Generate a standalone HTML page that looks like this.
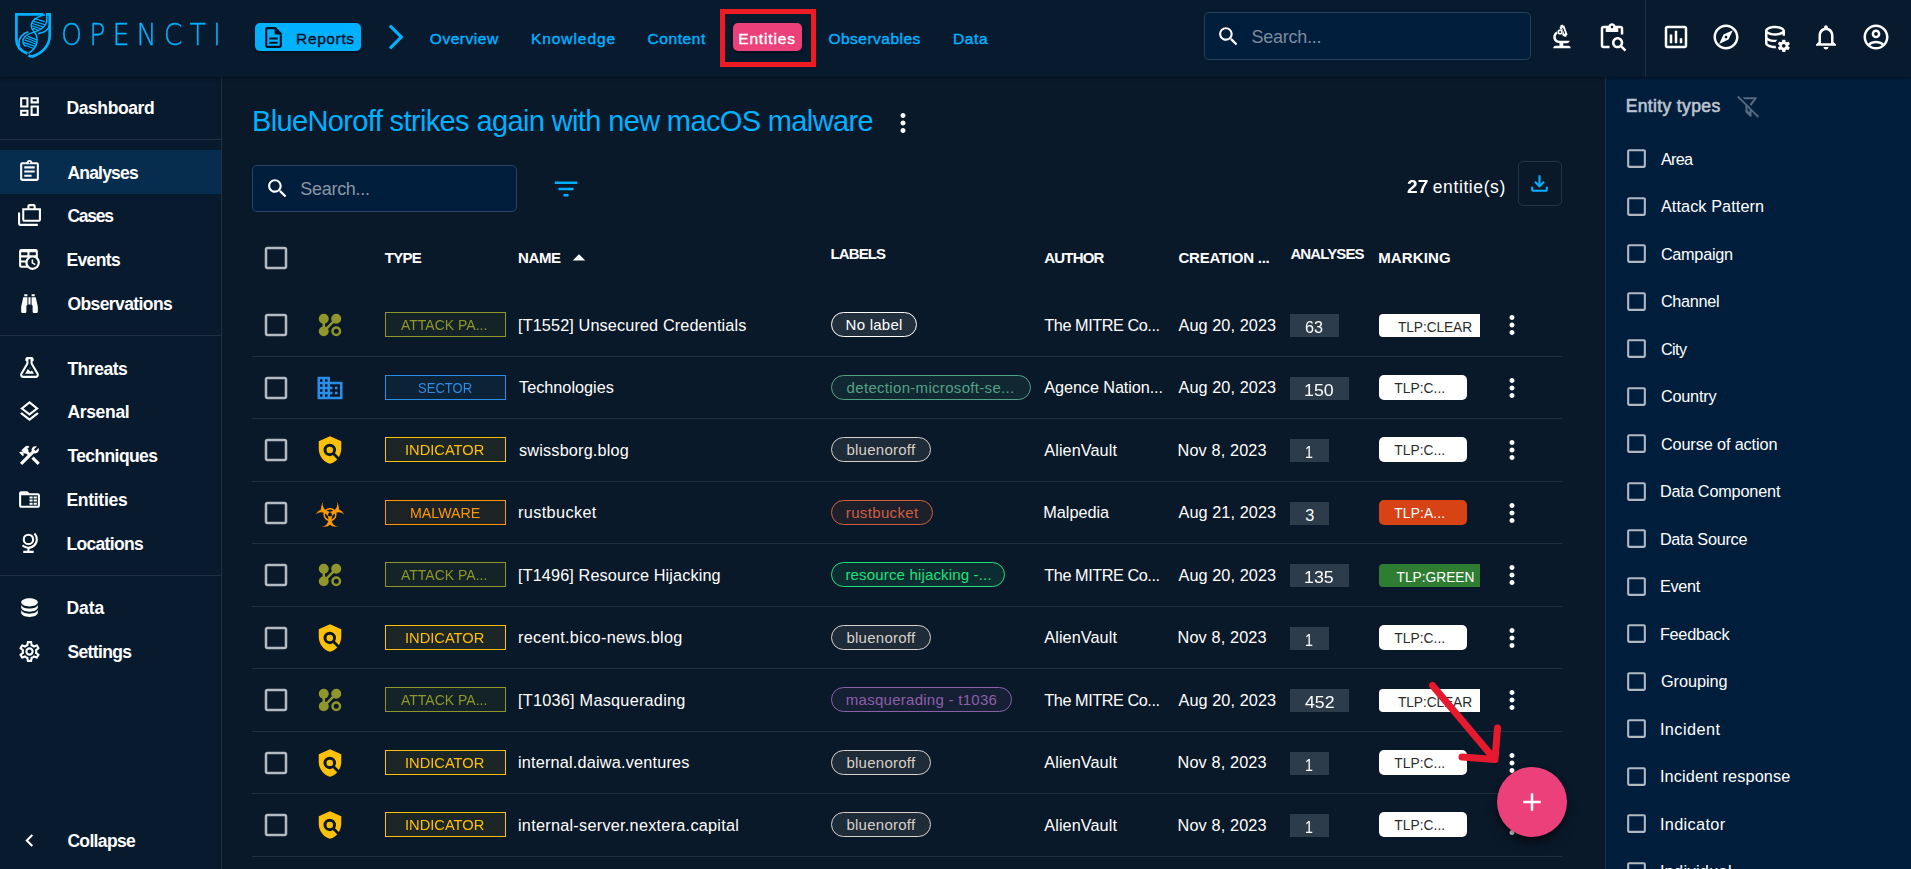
<!DOCTYPE html>
<html lang="en"><head><meta charset="utf-8"><title>OpenCTI - Entities</title><style>
html,body{margin:0;padding:0;}
body{width:1911px;height:869px;overflow:hidden;background:#0a1929;position:relative;font-family:'Liberation Sans', Arial, sans-serif;}
.sec{position:absolute;left:0;top:0;width:0;height:0;}
.b,.ic,.t{position:absolute;}
.ic{display:block;overflow:visible;}
.t{white-space:pre;color:#fff;font-weight:normal;font-family:'Liberation Sans', Arial, sans-serif;}
</style></head>
<body>
<header class="sec appbar">
<div class="b" style="left:0px;top:0px;width:1911px;height:77px;background:#071a2e;box-shadow:0 1px 3px rgba(0,0,0,.5);z-index:2"></div>
<svg class="ic" style="left:0;top:0;width:70px;height:70px;z-index:3" viewBox="0 0 70 70" fill="none" stroke="#00b1ff" stroke-linecap="butt">
<path d="M43.3 14.3H16.4V39.5C16.4 45.8 20.8 51 27.3 53.6M46.1 14.3H49.7V35.4C49.7 45 42.5 53.5 32.6 56.4" stroke-width="2.7"/>
<path d="M28.6 55.3Q30.4 56.5 33.2 56.3" stroke-width="2.8"/>
<path d="M45 14.7C37 16.3 31.3 20.5 31.2 25.5C31.1 28 32.5 30 34 31.6C36.5 34.5 37.8 38 36.9 42.5C36 47 32.5 50.8 28.5 53.3" stroke-width="1.5"/>
<path d="M46.4 14.7C48 19.5 46.5 24.5 42.5 28C40 30.2 36.5 31.5 32.6 32.6C27 34.3 22.9 37.5 22.9 41.5C22.9 43.5 24 45.2 25.7 46.3" stroke-width="1.5"/>
<path d="M50.2 23.6C49.3 29 44.5 32.8 38.1 33.6" stroke-width="1.9"/>
<path d="M28.5 31.8C22.5 33.5 18.5 38 19 43.5C19.1 44.6 19.4 45.6 19.8 46.4" stroke-width="1.7"/>
<path d="M34 18.5L44.7 21.6M32.3 20.9L45 24.7M31.6 23.3L43.6 27.1M31.9 25.7L40.9 28.8M33 28.1L38.1 30.2M27.8 36.4L36.7 39.9M25.7 37.8L37.1 42.3M24.7 39.9L36.4 44.3M24 42.6L35.4 46.4M24.7 45L33.6 48.5" stroke-width="1.15"/>
</svg>
<div class="b" style="left:255px;top:23px;width:106px;height:28px;background:#00b1ff;border-radius:5px;box-shadow:0 2px 3px rgba(0,0,0,.35);z-index:3"></div>
<svg class="ic" style="left:260.9px;top:25px;width:25px;height:25px;color:#04111f;z-index:4" viewBox="0 0 24 24" fill="currentColor"><path d="M8 16h8v2H8zm0-4h8v2H8zm6-10H6c-1.1 0-2 .9-2 2v16c0 1.1.89 2 1.99 2H18c1.1 0 2-.9 2-2V8l-6-6zm4 18H6V4h7v5h5v11z"/></svg>
<svg class="ic" style="left:381.2px;top:22.3px;width:30px;height:30px;color:#00b1ff;z-index:3" viewBox="0 0 24 24" fill="currentColor"><path d="M6.23 20.23 8 22l10-10L8 2 6.23 3.77 14.46 12z"/></svg>
<div class="b" style="left:733px;top:23px;width:69px;height:28px;background:#ec407a;border-radius:5px;box-shadow:0 2px 4px rgba(0,0,0,.45);z-index:3"></div>
<div class="b" style="left:1204px;top:12px;width:327px;height:47.5px;background:#001e3c;border:1px solid #25405f;border-radius:5px;box-sizing:border-box;z-index:3"></div>
<svg class="ic" style="left:1215.9px;top:23.8px;width:25px;height:25px;color:#fff;z-index:4" viewBox="0 0 24 24" fill="currentColor"><path d="M15.5 14h-.79l-.28-.27C15.41 12.59 16 11.11 16 9.5 16 5.91 13.09 3 9.5 3S3 5.91 3 9.5 5.91 16 9.5 16c1.61 0 3.09-.59 4.23-1.57l.27.28v.79l5 4.99L20.49 19l-4.99-5zm-6 0C7.01 14 5 11.99 5 9.5S7.01 5 9.5 5 14 7.01 14 9.5 11.99 14 9.5 14z"/></svg>
<svg class="ic" style="left:1547px;top:22.2px;width:30px;height:30px;color:#fff;z-index:3" viewBox="0 0 24 24" fill="currentColor"><path d="M7 19c-1.1 0-2 .9-2 2h14c0-1.1-.9-2-2-2h-4v-2h3c1.1 0 2-.9 2-2h-8c-1.66 0-3-1.34-3-3 0-1.09.59-2.04 1.46-2.56C8.17 9.03 8 8.54 8 8c0-.21.04-.42.09-.62C6.28 8.13 5 9.92 5 12c0 2.76 2.24 5 5 5v2H7z"/><path d="M10.56 5.51C11.91 5.54 13 6.64 13 8c0 .75-.33 1.41-.85 1.87l.59 1.62.94-.34.34.94 1.88-.68-.34-.94.94-.34-2.74-7.52-.94.34-.34-.94-1.88.68.34.94-.94.35.56 1.53z"/><circle cx="10.5" cy="7.9" r="2.1"/><circle cx="10.5" cy="7.9" r=".8" fill="#071a2e"/><path d="M12.6 4.9l1.5 4" stroke="#071a2e" stroke-width=".85" stroke-linecap="round"/></svg>
<svg class="ic" style="left:1597px;top:22.2px;width:30px;height:30px;color:#fff;z-index:3" viewBox="0 0 24 24" fill="currentColor"><path d="M5 5h2v3h10V5h2v5h2V5c0-1.1-.9-2-2-2h-4.18C14.4 1.84 13.3 1 12 1s-2.4.84-2.82 2H5c-1.1 0-2 .9-2 2v14c0 1.1.9 2 2 2h5v-2H5V5zm7-2c.55 0 1 .45 1 1s-.45 1-1 1-1-.45-1-1 .45-1 1-1z"/><path d="M20.3 18.9c.4-.7.7-1.5.7-2.4 0-2.5-2-4.5-4.5-4.5S12 14 12 16.5s2 4.5 4.5 4.5c.9 0 1.7-.3 2.4-.7l3.2 3.2 1.4-1.4-3.2-3.2zm-3.8.1c-1.4 0-2.5-1.1-2.5-2.5s1.1-2.5 2.5-2.5 2.5 1.1 2.5 2.5-1.1 2.5-2.5 2.5z"/></svg>
<svg class="ic" style="left:1661px;top:22.2px;width:30px;height:30px;color:#fff;z-index:3" viewBox="0 0 24 24" fill="currentColor"><path d="M9 17H7v-7h2v7zm4 0h-2V7h2v10zm4 0h-2v-4h2v4zm2 2H5V5h14v14zm0-16H5c-1.1 0-2 .9-2 2v14c0 1.1.9 2 2 2h14c1.1 0 2-.9 2-2V5c0-1.1-.9-2-2-2z"/></svg>
<svg class="ic" style="left:1711px;top:22.2px;width:30px;height:30px;color:#fff;z-index:3" viewBox="0 0 24 24" fill="currentColor"><path d="M12 2C6.48 2 2 6.48 2 12s4.48 10 10 10 10-4.48 10-10S17.52 2 12 2zm0 18c-4.41 0-8-3.59-8-8s3.59-8 8-8 8 3.59 8 8-3.59 8-8 8zm-5.5-2.5 7.51-3.49L17.5 6.5 9.99 9.99 6.5 17.5zm5.5-6.6c.61 0 1.1.49 1.1 1.1s-.49 1.1-1.1 1.1-1.1-.49-1.1-1.1.49-1.1 1.1-1.1z"/></svg>
<svg class="ic" style="left:1760.2px;top:22.2px;width:30px;height:30px;color:#fff;z-index:3" viewBox="0 0 24 24" fill="currentColor"><path d="M12 3C7.58 3 4 4.79 4 7v10c0 2.21 3.59 4 8 4 .34 0 .68-.01 1.01-.03a7 7 0 0 1-.6-1.99c-.14.01-.27.02-.41.02-3.87 0-6-1.5-6-2v-2.23c1.61.78 3.72 1.23 6 1.23.22 0 .44 0 .66-.020.28-.68.67-1.31 1.14-1.86-.58.08-1.18.13-1.8.13-3.87 0-6-1.5-6-2.25V9.64C7.47 10.47 9.61 11 12 11s4.53-.53 6-1.36v1.43a7 7 0 0 1 2-.010V7c0-2.21-3.58-4-8-4zm0 6C8.13 9 6 7.5 6 7s2.13-2 6-2 6 1.5 6 2-2.13 2-6 2z"/><path d="M23.8 20.4c.1 0 .1.1 0 .2l-1 1.7c-.1.1-.2.1-.3.1l-1.2-.4c-.3.2-.5.3-.8.5l-.2 1.3c0 .1-.1.2-.2.2h-2c-.1 0-.2-.1-.3-.2l-.2-1.3c-.3-.1-.6-.3-.8-.5l-1.2.5c-.1 0-.2 0-.3-.1l-1-1.7c-.1-.1 0-.2.1-.3l1.1-.8v-1l-1.1-.8c-.1-.1-.1-.2-.1-.3l1-1.7c.1-.1.2-.1.3-.1l1.2.5c.3-.2.5-.3.8-.5l.2-1.3c0-.1.1-.2.3-.2h2c.1 0 .2.1.2.2l.2 1.3c.3.1.6.3.9.5l1.2-.5c.1 0 .3 0 .3.1l1 1.7c.1.1 0 .2-.1.3l-1.1.8v1l1.1.8zM20.5 19c0-.800-.7-1.5-1.5-1.5s-1.5.7-1.5 1.5.7 1.5 1.5 1.5 1.5-.7 1.5-1.5z"/></svg>
<svg class="ic" style="left:1811px;top:22.2px;width:30px;height:30px;color:#fff;z-index:3" viewBox="0 0 24 24" fill="currentColor"><path d="M12 22c1.1 0 2-.9 2-2h-4c0 1.1.9 2 2 2zm6-6v-5c0-3.07-1.63-5.64-4.5-6.32V4c0-.83-.67-1.5-1.5-1.5s-1.5.67-1.5 1.5v.68C7.64 5.36 6 7.92 6 11v5l-2 2v1h16v-1l-2-2zm-2 1H8v-6c0-2.48 1.51-4.5 4-4.5s4 2.02 4 4.5v6z"/></svg>
<svg class="ic" style="left:1861px;top:22.2px;width:30px;height:30px;color:#fff;z-index:3" viewBox="0 0 24 24" fill="currentColor"><path d="M12 2C6.48 2 2 6.48 2 12s4.48 10 10 10 10-4.48 10-10S17.52 2 12 2zM7.35 18.5C8.66 17.56 10.26 17 12 17s3.34.56 4.65 1.5C15.34 19.44 13.74 20 12 20s-3.34-.56-4.65-1.5zm10.79-1.38C16.45 15.8 14.32 15 12 15s-4.45.8-6.14 2.12C4.7 15.73 4 13.95 4 12c0-4.42 3.58-8 8-8s8 3.58 8 8c0 1.95-.7 3.73-1.86 5.12z"/><path d="M12 6c-1.93 0-3.5 1.57-3.5 3.5S10.07 13 12 13s3.5-1.57 3.5-3.5S13.93 6 12 6zm0 5c-.83 0-1.5-.67-1.5-1.5S11.17 8 12 8s1.5.67 1.5 1.5S12.83 11 12 11z"/></svg>
<div class="b" style="left:1644.5px;top:0px;width:1px;height:77px;background:#1d2d40;z-index:3"></div>
<span class="t" style="left:60.74px;top:17px;line-height:35px;font-size:30.5px;font-weight:200;color:#00b1ff;font-family:'DejaVu Sans Light','DejaVu Sans',sans-serif;-webkit-text-stroke:0.35px;letter-spacing:8.049px;z-index:3;transform:scaleX(0.88);transform-origin:0 50%">OPENCTI</span>
<span class="t" style="left:296.1px;top:30px;line-height:17px;font-size:15.5px;color:#04111f;-webkit-text-stroke:0.4px;letter-spacing:0.613px;z-index:4">Reports</span>
<span class="t" style="left:429.8px;top:30px;line-height:17px;font-size:15.5px;color:#00b1ff;-webkit-text-stroke:0.4px;letter-spacing:0.543px;z-index:3">Overview</span>
<span class="t" style="left:531px;top:30px;line-height:17px;font-size:15.5px;color:#00b1ff;-webkit-text-stroke:0.4px;letter-spacing:0.928px;z-index:3">Knowledge</span>
<span class="t" style="left:647.5px;top:30px;line-height:17px;font-size:15.5px;color:#00b1ff;-webkit-text-stroke:0.4px;letter-spacing:0.586px;z-index:3">Content</span>
<span class="t" style="left:738.2px;top:30px;line-height:17px;font-size:15.5px;-webkit-text-stroke:0.4px;letter-spacing:0.86px;z-index:4">Entities</span>
<span class="t" style="left:828.4px;top:30px;line-height:17px;font-size:15.5px;color:#00b1ff;-webkit-text-stroke:0.4px;letter-spacing:0.494px;z-index:3">Observables</span>
<span class="t" style="left:953px;top:30px;line-height:17px;font-size:15.5px;color:#00b1ff;-webkit-text-stroke:0.4px;letter-spacing:0.627px;z-index:3">Data</span>
<span class="t" style="left:1251.6px;top:27px;line-height:20px;font-size:18px;color:#7d8b9e;letter-spacing:-0.279px;z-index:4">Search...</span>
</header>
<nav class="sec sidebar">
<div class="b" style="left:0px;top:77px;width:221px;height:792px;background:#071a2e;border-right:1px solid #1f3042;"></div>
<div class="b" style="left:0px;top:150px;width:221px;height:43.75px;background:#062d4e"></div>
<svg class="ic" style="left:17px;top:93.9px;width:25px;height:25px;color:#fff;" viewBox="0 0 24 24" fill="currentColor"><path d="M19 5v2h-4V5h4M9 5v6H5V5h4m10 8v6h-4v-6h4M9 17v2H5v-2h4M21 3h-8v6h8V3zM11 3H3v10h8V3zm10 8h-8v10h8V11zm-10 4H3v6h8v-6z"/></svg>
<div class="b" style="left:0px;top:139px;width:221px;height:1px;background:#1f3042"></div>
<svg class="ic" style="left:17px;top:159.4px;width:25px;height:25px;color:#fff;" viewBox="0 0 24 24" fill="currentColor"><path d="M7 15h7v2H7zm0-4h10v2H7zm0-4h10v2H7zm12-4h-4.18C14.4 1.84 13.3 1 12 1c-1.3 0-2.4.84-2.82 2H5c-.14 0-.27.01-.4.04-.39.08-.74.28-1.01.55-.18.18-.33.4-.43.64-.1.23-.16.49-.16.77v14c0 .27.06.54.16.78s.25.45.43.64c.27.27.62.47 1.01.55.13.02.26.03.4.03h14c1.1 0 2-.9 2-2V5c0-1.1-.9-2-2-2zm-7-.25c.41 0 .75.34.75.75s-.34.75-.75.75-.75-.34-.75-.75.34-.75.75-.75zM19 19H5V5h14v14z"/></svg>
<svg class="ic" style="left:17px;top:203.1px;width:25px;height:25px;color:#fff;" viewBox="0 0 24 24" fill="currentColor"><path d="M3 9H1v11c0 1.11.89 2 2 2h17v-2H3V9z"/><path d="M18 5V3c0-1.1-.9-2-2-2h-4c-1.1 0-2 .9-2 2v2H5v11c0 1.11.89 2 2 2h14c1.11 0 2-.89 2-2V5h-5zm-6-2h4v2h-4V3zm9 13H7V7h14v9z"/></svg>
<svg class="ic" style="left:17px;top:246.9px;width:25px;height:25px;color:#fff;" viewBox="0 0 24 24" fill="currentColor"><path d="M14,12H15.5V14.82L17.94,16.23L17.19,17.53L14,15.69V12M4,2H18A2,2 0 0,1 20,4V10.1C21.24,11.36 22,13.09 22,15A7,7 0 0,1 15,22C13.09,22 11.36,21.24 10.1,20H4A2,2 0 0,1 2,18V4A2,2 0 0,1 4,2M4,15V18H8.67C8.24,17.09 8,16.07 8,15H4M4,8H10V5H4V8M18,8V5H12V8H18M4,13H8.29C8.63,11.85 9.26,10.82 10.1,10H4V13M15,10.15A4.85,4.85 0 0,0 10.15,15C10.15,17.68 12.32,19.85 15,19.85A4.85,4.85 0 0,0 19.85,15C19.85,12.32 17.68,10.15 15,10.15Z"/></svg>
<svg class="ic" style="left:17px;top:290.6px;width:25px;height:25px;color:#fff;" viewBox="0 0 24 24" fill="currentColor"><path d="M11,6H13V13H11V6M9,20A1,1 0 0,1 8,21H5A1,1 0 0,1 4,20V15L6,6H10V13A1,1 0 0,1 9,14V20M10,5H7V3H10V5M15,20V14A1,1 0 0,1 14,13V6H18L20,15V20A1,1 0 0,1 19,21H16A1,1 0 0,1 15,20M14,5V3H17V5H14Z"/></svg>
<div class="b" style="left:0px;top:335px;width:221px;height:1px;background:#1f3042"></div>
<svg class="ic" style="left:17px;top:355.4px;width:25px;height:25px;color:#fff;" viewBox="0 0 24 24" fill="currentColor"><path d="M5,19A1,1 0 0,0 6,20H18A1,1 0 0,0 19,19C19,18.79 18.93,18.59 18.82,18.43L13,8.35V4H11V8.35L5.18,18.43C5.07,18.59 5,18.79 5,19M6,22A3,3 0 0,1 3,19C3,18.4 3.18,17.84 3.5,17.37L9,7.81V6A1,1 0 0,1 8,5V4A2,2 0 0,1 10,2H14A2,2 0 0,1 16,4V5A1,1 0 0,1 15,6V7.81L20.5,17.37C20.82,17.84 21,18.4 21,19A3,3 0 0,1 18,22H6M13,16L14.34,14.66L16.27,18H7.73L10.39,13.39L13,16M12.5,12A0.5,0.5 0 0,1 13,12.5A0.5,0.5 0 0,1 12.5,13A0.5,0.5 0 0,1 12,12.5A0.5,0.5 0 0,1 12.5,12Z"/></svg>
<svg class="ic" style="left:17px;top:399.1px;width:25px;height:25px;color:#fff;" viewBox="0 0 24 24" fill="currentColor"><path d="M11.99 18.54l-7.37-5.73L3 14.07l9 7 9-7-1.63-1.27-7.38 5.74zM12 16l7.36-5.73L21 9l-9-7-9 7 1.63 1.27L12 16zm0-11.47L17.74 9 12 13.47 6.26 9 12 4.53z"/></svg>
<svg class="ic" style="left:17px;top:442.9px;width:25px;height:25px;color:#fff;" viewBox="0 0 24 24" fill="currentColor"><path d="m13.7826 15.1719 2.1213-2.1213 5.9963 5.9962-2.1213 2.1213zM17.5 10c1.93 0 3.5-1.57 3.5-3.5 0-.58-.16-1.12-.41-1.6l-2.7 2.7-1.49-1.49 2.7-2.7c-.48-.25-1.02-.41-1.6-.41C15.57 3 14 4.57 14 6.5c0 .41.08.8.21 1.16l-1.85 1.85-1.78-1.78.71-.71-1.41-1.41L12 3.49c-1.17-1.17-3.07-1.17-4.24 0L4.22 7.03l1.41 1.41H2.81l-.71.71 3.54 3.54.71-.71V9.15l1.41 1.41.71-.71 1.78 1.78-7.41 7.41 2.12 2.12L16.34 9.79c.36.13.75.21 1.16.21z"/></svg>
<svg class="ic" style="left:17px;top:486.6px;width:25px;height:25px;color:#fff;" viewBox="0 0 24 24" fill="currentColor"><path d="M4 4C2.89 4 2 4.89 2 6V18C2 19.11 2.9 20 4 20H20C21.11 20 22 19.11 22 18V8C22 6.89 21.1 6 20 6H12L10 4M4 8H20V18H4M12 9V11H15V9M16 9V11H19V9M12 12V14H15V12M16 12V14H19V12M12 15V17H15V15M16 15V17H19V15Z"/></svg>
<svg class="ic" style="left:17px;top:530.4px;width:25px;height:25px;color:#fff;" viewBox="0 0 24 24" fill="currentColor"><path d="M17.36,2.64L15.95,4.06C17.26,5.37 18,7.14 18,9A7,7 0 0,1 11,16C9.15,16 7.37,15.26 6.06,13.95L4.64,15.36C6.08,16.8 7.97,17.71 10,17.93V20H6V22H16V20H12V17.94C16.55,17.43 20,13.58 20,9C20,6.62 19.05,4.33 17.36,2.64M11,3.5A5.5,5.5 0 0,0 5.5,9A5.5,5.5 0 0,0 11,14.5A5.5,5.5 0 0,0 16.5,9A5.5,5.5 0 0,0 11,3.5M11,5.5C12.94,5.5 14.5,7.07 14.5,9A3.5,3.5 0 0,1 11,12.5A3.5,3.5 0 0,1 7.5,9A3.5,3.5 0 0,1 11,5.5Z"/></svg>
<div class="b" style="left:0px;top:575px;width:221px;height:1px;background:#1f3042"></div>
<svg class="ic" style="left:17px;top:595.1px;width:25px;height:25px;color:#fff;" viewBox="0 0 24 24" fill="currentColor"><path d="M12,3C7.58,3 4,4.79 4,7C4,9.21 7.58,11 12,11C16.42,11 20,9.21 20,7C20,4.79 16.42,3 12,3M4,9V12C4,14.21 7.58,16 12,16C16.42,16 20,14.21 20,12V9C20,11.21 16.42,13 12,13C7.58,13 4,11.21 4,9M4,14V17C4,19.21 7.58,21 12,21C16.42,21 20,19.21 20,17V14C20,16.21 16.42,18 12,18C7.58,18 4,16.21 4,14Z"/></svg>
<svg class="ic" style="left:17px;top:638.9px;width:25px;height:25px;color:#fff;" viewBox="0 0 24 24" fill="currentColor"><path d="M12,8A4,4 0 0,1 16,12A4,4 0 0,1 12,16A4,4 0 0,1 8,12A4,4 0 0,1 12,8M12,10A2,2 0 0,0 10,12A2,2 0 0,0 12,14A2,2 0 0,0 14,12A2,2 0 0,0 12,10M10,22C9.75,22 9.54,21.82 9.5,21.58L9.13,18.93C8.5,18.68 7.96,18.34 7.44,17.94L4.95,18.95C4.73,19.03 4.46,18.95 4.34,18.73L2.34,15.27C2.21,15.05 2.27,14.78 2.46,14.63L4.57,12.97L4.5,12L4.57,11L2.46,9.37C2.27,9.22 2.21,8.95 2.34,8.73L4.34,5.27C4.46,5.05 4.73,4.96 4.95,5.05L7.44,6.05C7.96,5.66 8.5,5.32 9.13,5.07L9.5,2.42C9.54,2.18 9.75,2 10,2H14C14.25,2 14.46,2.18 14.5,2.42L14.87,5.07C15.5,5.32 16.04,5.66 16.56,6.05L19.05,5.05C19.27,4.96 19.54,5.05 19.66,5.27L21.66,8.73C21.79,8.95 21.73,9.22 21.54,9.37L19.43,11L19.5,12L19.43,13L21.54,14.63C21.73,14.78 21.79,15.05 21.66,15.27L19.66,18.73C19.54,18.95 19.27,19.04 19.05,18.95L16.56,17.95C16.04,18.34 15.5,18.68 14.87,18.93L14.5,21.58C14.46,21.82 14.25,22 14,22H10M11.25,4L10.88,6.61C9.68,6.86 8.62,7.5 7.85,8.39L5.44,7.35L4.69,8.65L6.8,10.2C6.4,11.37 6.4,12.64 6.8,13.8L4.68,15.36L5.43,16.66L7.86,15.62C8.63,16.5 9.68,17.14 10.87,17.38L11.24,20H12.76L13.13,17.39C14.32,17.14 15.37,16.5 16.14,15.62L18.57,16.66L19.32,15.36L17.2,13.81C17.6,12.64 17.6,11.37 17.2,10.2L19.31,8.65L18.56,7.35L16.15,8.39C15.38,7.5 14.32,6.86 13.12,6.62L12.75,4H11.25Z"/></svg>
<svg class="ic" style="left:17px;top:827.8px;width:25px;height:25px;color:#fff;" viewBox="0 0 24 24" fill="currentColor"><path d="M15.41 7.41 14 6l-6 6 6 6 1.41-1.41L10.83 12z"/></svg>
<span class="t" style="left:66.4px;top:98px;line-height:20px;font-size:17.5px;font-weight:bold;letter-spacing:-0.389px;">Dashboard</span>
<span class="t" style="left:67.4px;top:163px;line-height:20px;font-size:17.5px;font-weight:bold;letter-spacing:-0.789px;">Analyses</span>
<span class="t" style="left:67.4px;top:206px;line-height:20px;font-size:17.5px;font-weight:bold;letter-spacing:-1.234px;">Cases</span>
<span class="t" style="left:66.4px;top:250px;line-height:20px;font-size:17.5px;font-weight:bold;letter-spacing:-0.611px;">Events</span>
<span class="t" style="left:67.4px;top:294px;line-height:20px;font-size:17.5px;font-weight:bold;letter-spacing:-0.592px;">Observations</span>
<span class="t" style="left:67.4px;top:359px;line-height:20px;font-size:17.5px;font-weight:bold;letter-spacing:-0.48px;">Threats</span>
<span class="t" style="left:67.4px;top:402px;line-height:20px;font-size:17.5px;font-weight:bold;letter-spacing:-0.323px;">Arsenal</span>
<span class="t" style="left:67.4px;top:446px;line-height:20px;font-size:17.5px;font-weight:bold;letter-spacing:-0.601px;">Techniques</span>
<span class="t" style="left:66.4px;top:490px;line-height:20px;font-size:17.5px;font-weight:bold;letter-spacing:-0.268px;">Entities</span>
<span class="t" style="left:66.4px;top:534px;line-height:20px;font-size:17.5px;font-weight:bold;letter-spacing:-0.664px;">Locations</span>
<span class="t" style="left:66.4px;top:598px;line-height:20px;font-size:17.5px;font-weight:bold;letter-spacing:-0.033px;">Data</span>
<span class="t" style="left:67.4px;top:642px;line-height:20px;font-size:17.5px;font-weight:bold;letter-spacing:-0.629px;">Settings</span>
<span class="t" style="left:67.4px;top:831px;line-height:20px;font-size:17.5px;font-weight:bold;letter-spacing:-0.658px;">Collapse</span>
</nav>
<main class="sec content">
<svg class="ic" style="left:888px;top:108px;width:30px;height:30px;color:#fff;" viewBox="0 0 24 24" fill="currentColor"><path d="M12 8c1.1 0 2-.9 2-2s-.9-2-2-2-2 .9-2 2 .9 2 2 2zm0 2c-1.1 0-2 .9-2 2s.9 2 2 2 2-.9 2-2-.9-2-2-2zm0 6c-1.1 0-2 .9-2 2s.9 2 2 2 2-.9 2-2-.9-2-2-2z"/></svg>
<div class="b" style="left:252px;top:165.3px;width:265px;height:46.5px;background:#001e3c;border:1px solid #2a4564;border-radius:5px;box-sizing:border-box"></div>
<svg class="ic" style="left:264.9px;top:175.8px;width:25px;height:25px;color:#fff;" viewBox="0 0 24 24" fill="currentColor"><path d="M15.5 14h-.79l-.28-.27C15.41 12.59 16 11.11 16 9.5 16 5.91 13.09 3 9.5 3S3 5.91 3 9.5 5.91 16 9.5 16c1.61 0 3.09-.59 4.23-1.57l.27.28v.79l5 4.99L20.49 19l-4.99-5zm-6 0C7.01 14 5 11.99 5 9.5S7.01 5 9.5 5 14 7.01 14 9.5 11.99 14 9.5 14z"/></svg>
<svg class="ic" style="left:551px;top:173.8px;width:30px;height:30px;color:#00b1ff;" viewBox="0 0 24 24" fill="currentColor"><path d="M10 18h4v-2h-4v2zM3 6v2h18V6H3zm3 7h12v-2H6v2z"/></svg>
<div class="b" style="left:1518px;top:161px;width:43.75px;height:44.7px;border:1px solid #243447;border-radius:5px;box-sizing:border-box"></div>
<svg class="ic" style="left:1527.1px;top:171px;width:25px;height:25px;color:#00b1ff;" viewBox="0 0 24 24" fill="currentColor"><path d="M18 15v3H6v-3H4v3c0 1.1.9 2 2 2h12c1.1 0 2-.9 2-2v-3h-2zm-1-4-1.41-1.41L13 12.17V4h-2v8.17L8.41 9.59 7 11l5 5 5-5z"/></svg>
<svg class="ic" style="left:261px;top:242.8px;width:30px;height:30px;color:#b4bac1;" viewBox="0 0 24 24" fill="currentColor"><path d="M19 5v14H5V5h14m0-2H5c-1.1 0-2 .9-2 2v14c0 1.1.9 2 2 2h14c1.1 0 2-.9 2-2V5c0-1.1-.9-2-2-2z"/></svg>
<svg class="ic" style="left:564px;top:242.7px;width:30px;height:30px;color:#fff;" viewBox="0 0 24 24" fill="currentColor"><path d="m7 14 5-5 5 5z"/></svg>
<div class="b" style="left:252px;top:356px;width:1310px;height:1px;background:#202f40"></div>
<svg class="ic" style="left:261px;top:310.2px;width:30px;height:30px;color:#b4bac1;" viewBox="0 0 24 24" fill="currentColor"><path d="M19 5v14H5V5h14m0-2H5c-1.1 0-2 .9-2 2v14c0 1.1.9 2 2 2h14c1.1 0 2-.9 2-2V5c0-1.1-.9-2-2-2z"/></svg>
<svg class="ic" style="left:315px;top:310.2px;width:30px;height:30px;color:#8f962a;" viewBox="0 0 24 24" fill="currentColor"><path d="M7,3A4,4 0 0,1 11,7C11,8.86 9.73,10.43 8,10.87V13.13C8.37,13.22 8.72,13.37 9.04,13.56L13.56,9.04C13.2,8.44 13,7.75 13,7A4,4 0 0,1 17,3A4,4 0 0,1 21,7A4,4 0 0,1 17,11C16.26,11 15.57,10.8 15,10.45L10.45,15C10.8,15.57 11,16.26 11,17A4,4 0 0,1 7,21A4,4 0 0,1 3,17C3,15.14 4.27,13.57 6,13.13V10.87C4.27,10.43 3,8.86 3,7A4,4 0 0,1 7,3M17,13A4,4 0 0,1 21,17A4,4 0 0,1 17,21A4,4 0 0,1 13,17A4,4 0 0,1 17,13M17,15A2,2 0 0,0 15,17A2,2 0 0,0 17,19A2,2 0 0,0 19,17A2,2 0 0,0 17,15Z"/></svg>
<div class="b" style="left:385px;top:312px;width:121px;height:25px;border:1px solid #8f962a;background:rgba(143,150,42,0.08);box-sizing:border-box"></div>
<div class="b" style="left:831px;top:312px;width:86px;height:25px;border:1px solid #ffffff;background:rgba(255,255,255,0.1);box-sizing:border-box;border-radius:13px"></div>
<div class="b" style="left:1290px;top:314px;width:49px;height:23px;background:#2d3c4b"></div>
<div class="b" style="left:1379px;top:314px;width:101px;height:23px;background:#fff;border-radius:4px 0 0 4px"></div>
<svg class="ic" style="left:1497px;top:310.3px;width:30px;height:30px;color:#fff;" viewBox="0 0 24 24" fill="currentColor"><path d="M12 8c1.1 0 2-.9 2-2s-.9-2-2-2-2 .9-2 2 .9 2 2 2zm0 2c-1.1 0-2 .9-2 2s.9 2 2 2 2-.9 2-2-.9-2-2-2zm0 6c-1.1 0-2 .9-2 2s.9 2 2 2 2-.9 2-2-.9-2-2-2z"/></svg>
<div class="b" style="left:252px;top:418px;width:1310px;height:1px;background:#202f40"></div>
<svg class="ic" style="left:261px;top:372.7px;width:30px;height:30px;color:#b4bac1;" viewBox="0 0 24 24" fill="currentColor"><path d="M19 5v14H5V5h14m0-2H5c-1.1 0-2 .9-2 2v14c0 1.1.9 2 2 2h14c1.1 0 2-.9 2-2V5c0-1.1-.9-2-2-2z"/></svg>
<svg class="ic" style="left:315px;top:372.7px;width:30px;height:30px;color:#2a8de8;" viewBox="0 0 24 24" fill="currentColor"><path d="M12 7V3H2v18h20V7H12zM6 19H4v-2h2v2zm0-4H4v-2h2v2zm0-4H4V9h2v2zm0-4H4V5h2v2zm4 12H8v-2h2v2zm0-4H8v-2h2v2zm0-4H8V9h2v2zm0-4H8V5h2v2zm10 12h-8v-2h2v-2h-2v-2h2v-2h-2V9h8v10zm-2-8h-2v2h2v-2zm0 4h-2v2h2v-2z"/></svg>
<div class="b" style="left:385px;top:375px;width:121px;height:25px;border:1px solid #2a8de8;background:rgba(42,141,232,0.08);box-sizing:border-box"></div>
<div class="b" style="left:831px;top:375px;width:200px;height:25px;border:1px solid #54a285;background:rgba(84,162,133,0.1);box-sizing:border-box;border-radius:13px"></div>
<div class="b" style="left:1290px;top:377px;width:59px;height:23px;background:#2d3c4b"></div>
<div class="b" style="left:1379px;top:375px;width:88px;height:25px;background:#fff;border-radius:5px"></div>
<svg class="ic" style="left:1497px;top:372.8px;width:30px;height:30px;color:#fff;" viewBox="0 0 24 24" fill="currentColor"><path d="M12 8c1.1 0 2-.9 2-2s-.9-2-2-2-2 .9-2 2 .9 2 2 2zm0 2c-1.1 0-2 .9-2 2s.9 2 2 2 2-.9 2-2-.9-2-2-2zm0 6c-1.1 0-2 .9-2 2s.9 2 2 2 2-.9 2-2-.9-2-2-2z"/></svg>
<div class="b" style="left:252px;top:481px;width:1310px;height:1px;background:#202f40"></div>
<svg class="ic" style="left:261px;top:435.2px;width:30px;height:30px;color:#b4bac1;" viewBox="0 0 24 24" fill="currentColor"><path d="M19 5v14H5V5h14m0-2H5c-1.1 0-2 .9-2 2v14c0 1.1.9 2 2 2h14c1.1 0 2-.9 2-2V5c0-1.1-.9-2-2-2z"/></svg>
<svg class="ic" style="left:315px;top:435.2px;width:30px;height:30px;color:#ffc107;" viewBox="0 0 24 24" fill="currentColor"><path d="M12 1 3 5v6c0 5.55 3.84 10.74 9 12 5.16-1.26 9-6.45 9-12V5l-9-4z"/><g fill="none" stroke="#0a1929"><circle cx="11.8" cy="11.9" r="3.8" stroke-width="2.4"/><path d="M14.7 14.8 19.5 19.6" stroke-width="2.2"/></g></svg>
<div class="b" style="left:385px;top:437px;width:121px;height:25px;border:1px solid #ffc107;background:rgba(255,193,7,0.08);box-sizing:border-box"></div>
<div class="b" style="left:831px;top:437px;width:100px;height:25px;border:1px solid #d9d0c9;background:rgba(217,208,201,0.1);box-sizing:border-box;border-radius:13px"></div>
<div class="b" style="left:1290px;top:439px;width:39px;height:23px;background:#2d3c4b"></div>
<div class="b" style="left:1379px;top:437px;width:88px;height:25px;background:#fff;border-radius:5px"></div>
<svg class="ic" style="left:1497px;top:435.3px;width:30px;height:30px;color:#fff;" viewBox="0 0 24 24" fill="currentColor"><path d="M12 8c1.1 0 2-.9 2-2s-.9-2-2-2-2 .9-2 2 .9 2 2 2zm0 2c-1.1 0-2 .9-2 2s.9 2 2 2 2-.9 2-2-.9-2-2-2zm0 6c-1.1 0-2 .9-2 2s.9 2 2 2 2-.9 2-2-.9-2-2-2z"/></svg>
<div class="b" style="left:252px;top:543px;width:1310px;height:1px;background:#202f40"></div>
<svg class="ic" style="left:261px;top:497.7px;width:30px;height:30px;color:#b4bac1;" viewBox="0 0 24 24" fill="currentColor"><path d="M19 5v14H5V5h14m0-2H5c-1.1 0-2 .9-2 2v14c0 1.1.9 2 2 2h14c1.1 0 2-.9 2-2V5c0-1.1-.9-2-2-2z"/></svg>
<svg class="ic" style="left:315px;top:497.7px;width:30px;height:30px;color:#ff9800;" viewBox="0 0 24 24" fill="currentColor"><g transform="translate(12,13.2) scale(1.09)"><mask id="bhm" maskUnits="userSpaceOnUse" x="-12" y="-13" width="24" height="24"><rect x="-12" y="-13" width="24" height="24" fill="#000"/><g fill="#fff"><circle cx="0" cy="-4.84" r="6.6"/><circle cx="-4.19" cy="2.42" r="6.6"/><circle cx="4.19" cy="2.42" r="6.6"/></g><g fill="#000"><circle cx="0" cy="-7.5" r="5.4"/><circle cx="-6.495" cy="3.75" r="5.4"/><circle cx="6.495" cy="3.75" r="5.4"/></g><circle r="4.3" fill="none" stroke="#fff" stroke-width="1.1"/><circle r="1.4" fill="#000"/><path d="M0 0V-3.5M0 0l-3.03 1.75M0 0l3.03 1.75" stroke="#000" stroke-width=".6"/></mask><rect x="-12" y="-13" width="24" height="24" mask="url(#bhm)"/></g></svg>
<div class="b" style="left:385px;top:500px;width:121px;height:25px;border:1px solid #ff9800;background:rgba(255,152,0,0.08);box-sizing:border-box"></div>
<div class="b" style="left:831px;top:500px;width:102px;height:25px;border:1px solid #cd5f41;background:rgba(205,95,65,0.1);box-sizing:border-box;border-radius:13px"></div>
<div class="b" style="left:1290px;top:502px;width:39px;height:23px;background:#2d3c4b"></div>
<div class="b" style="left:1379px;top:500px;width:88px;height:25px;background:#d84315;border-radius:5px"></div>
<svg class="ic" style="left:1497px;top:497.8px;width:30px;height:30px;color:#fff;" viewBox="0 0 24 24" fill="currentColor"><path d="M12 8c1.1 0 2-.9 2-2s-.9-2-2-2-2 .9-2 2 .9 2 2 2zm0 2c-1.1 0-2 .9-2 2s.9 2 2 2 2-.9 2-2-.9-2-2-2zm0 6c-1.1 0-2 .9-2 2s.9 2 2 2 2-.9 2-2-.9-2-2-2z"/></svg>
<div class="b" style="left:252px;top:606px;width:1310px;height:1px;background:#202f40"></div>
<svg class="ic" style="left:261px;top:560.2px;width:30px;height:30px;color:#b4bac1;" viewBox="0 0 24 24" fill="currentColor"><path d="M19 5v14H5V5h14m0-2H5c-1.1 0-2 .9-2 2v14c0 1.1.9 2 2 2h14c1.1 0 2-.9 2-2V5c0-1.1-.9-2-2-2z"/></svg>
<svg class="ic" style="left:315px;top:560.2px;width:30px;height:30px;color:#8f962a;" viewBox="0 0 24 24" fill="currentColor"><path d="M7,3A4,4 0 0,1 11,7C11,8.86 9.73,10.43 8,10.87V13.13C8.37,13.22 8.72,13.37 9.04,13.56L13.56,9.04C13.2,8.44 13,7.75 13,7A4,4 0 0,1 17,3A4,4 0 0,1 21,7A4,4 0 0,1 17,11C16.26,11 15.57,10.8 15,10.45L10.45,15C10.8,15.57 11,16.26 11,17A4,4 0 0,1 7,21A4,4 0 0,1 3,17C3,15.14 4.27,13.57 6,13.13V10.87C4.27,10.43 3,8.86 3,7A4,4 0 0,1 7,3M17,13A4,4 0 0,1 21,17A4,4 0 0,1 17,21A4,4 0 0,1 13,17A4,4 0 0,1 17,13M17,15A2,2 0 0,0 15,17A2,2 0 0,0 17,19A2,2 0 0,0 19,17A2,2 0 0,0 17,15Z"/></svg>
<div class="b" style="left:385px;top:562px;width:121px;height:25px;border:1px solid #8f962a;background:rgba(143,150,42,0.08);box-sizing:border-box"></div>
<div class="b" style="left:831px;top:562px;width:174px;height:25px;border:1px solid #1fe07c;background:rgba(31,224,124,0.1);box-sizing:border-box;border-radius:13px"></div>
<div class="b" style="left:1290px;top:564px;width:59px;height:23px;background:#2d3c4b"></div>
<div class="b" style="left:1379px;top:564px;width:101px;height:23px;background:#2e7d32;border-radius:4px 0 0 4px"></div>
<svg class="ic" style="left:1497px;top:560.3px;width:30px;height:30px;color:#fff;" viewBox="0 0 24 24" fill="currentColor"><path d="M12 8c1.1 0 2-.9 2-2s-.9-2-2-2-2 .9-2 2 .9 2 2 2zm0 2c-1.1 0-2 .9-2 2s.9 2 2 2 2-.9 2-2-.9-2-2-2zm0 6c-1.1 0-2 .9-2 2s.9 2 2 2 2-.9 2-2-.9-2-2-2z"/></svg>
<div class="b" style="left:252px;top:668px;width:1310px;height:1px;background:#202f40"></div>
<svg class="ic" style="left:261px;top:622.7px;width:30px;height:30px;color:#b4bac1;" viewBox="0 0 24 24" fill="currentColor"><path d="M19 5v14H5V5h14m0-2H5c-1.1 0-2 .9-2 2v14c0 1.1.9 2 2 2h14c1.1 0 2-.9 2-2V5c0-1.1-.9-2-2-2z"/></svg>
<svg class="ic" style="left:315px;top:622.7px;width:30px;height:30px;color:#ffc107;" viewBox="0 0 24 24" fill="currentColor"><path d="M12 1 3 5v6c0 5.55 3.84 10.74 9 12 5.16-1.26 9-6.45 9-12V5l-9-4z"/><g fill="none" stroke="#0a1929"><circle cx="11.8" cy="11.9" r="3.8" stroke-width="2.4"/><path d="M14.7 14.8 19.5 19.6" stroke-width="2.2"/></g></svg>
<div class="b" style="left:385px;top:625px;width:121px;height:25px;border:1px solid #ffc107;background:rgba(255,193,7,0.08);box-sizing:border-box"></div>
<div class="b" style="left:831px;top:625px;width:100px;height:25px;border:1px solid #d9d0c9;background:rgba(217,208,201,0.1);box-sizing:border-box;border-radius:13px"></div>
<div class="b" style="left:1290px;top:627px;width:39px;height:23px;background:#2d3c4b"></div>
<div class="b" style="left:1379px;top:625px;width:88px;height:25px;background:#fff;border-radius:5px"></div>
<svg class="ic" style="left:1497px;top:622.8px;width:30px;height:30px;color:#fff;" viewBox="0 0 24 24" fill="currentColor"><path d="M12 8c1.1 0 2-.9 2-2s-.9-2-2-2-2 .9-2 2 .9 2 2 2zm0 2c-1.1 0-2 .9-2 2s.9 2 2 2 2-.9 2-2-.9-2-2-2zm0 6c-1.1 0-2 .9-2 2s.9 2 2 2 2-.9 2-2-.9-2-2-2z"/></svg>
<div class="b" style="left:252px;top:731px;width:1310px;height:1px;background:#202f40"></div>
<svg class="ic" style="left:261px;top:685.2px;width:30px;height:30px;color:#b4bac1;" viewBox="0 0 24 24" fill="currentColor"><path d="M19 5v14H5V5h14m0-2H5c-1.1 0-2 .9-2 2v14c0 1.1.9 2 2 2h14c1.1 0 2-.9 2-2V5c0-1.1-.9-2-2-2z"/></svg>
<svg class="ic" style="left:315px;top:685.2px;width:30px;height:30px;color:#8f962a;" viewBox="0 0 24 24" fill="currentColor"><path d="M7,3A4,4 0 0,1 11,7C11,8.86 9.73,10.43 8,10.87V13.13C8.37,13.22 8.72,13.37 9.04,13.56L13.56,9.04C13.2,8.44 13,7.75 13,7A4,4 0 0,1 17,3A4,4 0 0,1 21,7A4,4 0 0,1 17,11C16.26,11 15.57,10.8 15,10.45L10.45,15C10.8,15.57 11,16.26 11,17A4,4 0 0,1 7,21A4,4 0 0,1 3,17C3,15.14 4.27,13.57 6,13.13V10.87C4.27,10.43 3,8.86 3,7A4,4 0 0,1 7,3M17,13A4,4 0 0,1 21,17A4,4 0 0,1 17,21A4,4 0 0,1 13,17A4,4 0 0,1 17,13M17,15A2,2 0 0,0 15,17A2,2 0 0,0 17,19A2,2 0 0,0 19,17A2,2 0 0,0 17,15Z"/></svg>
<div class="b" style="left:385px;top:687px;width:121px;height:25px;border:1px solid #8f962a;background:rgba(143,150,42,0.08);box-sizing:border-box"></div>
<div class="b" style="left:831px;top:687px;width:181px;height:25px;border:1px solid #8d5fa8;background:rgba(141,95,168,0.1);box-sizing:border-box;border-radius:13px"></div>
<div class="b" style="left:1290px;top:689px;width:59px;height:23px;background:#2d3c4b"></div>
<div class="b" style="left:1379px;top:689px;width:101px;height:23px;background:#fff;border-radius:4px 0 0 4px"></div>
<svg class="ic" style="left:1497px;top:685.3px;width:30px;height:30px;color:#fff;" viewBox="0 0 24 24" fill="currentColor"><path d="M12 8c1.1 0 2-.9 2-2s-.9-2-2-2-2 .9-2 2 .9 2 2 2zm0 2c-1.1 0-2 .9-2 2s.9 2 2 2 2-.9 2-2-.9-2-2-2zm0 6c-1.1 0-2 .9-2 2s.9 2 2 2 2-.9 2-2-.9-2-2-2z"/></svg>
<div class="b" style="left:252px;top:793px;width:1310px;height:1px;background:#202f40"></div>
<svg class="ic" style="left:261px;top:747.7px;width:30px;height:30px;color:#b4bac1;" viewBox="0 0 24 24" fill="currentColor"><path d="M19 5v14H5V5h14m0-2H5c-1.1 0-2 .9-2 2v14c0 1.1.9 2 2 2h14c1.1 0 2-.9 2-2V5c0-1.1-.9-2-2-2z"/></svg>
<svg class="ic" style="left:315px;top:747.7px;width:30px;height:30px;color:#ffc107;" viewBox="0 0 24 24" fill="currentColor"><path d="M12 1 3 5v6c0 5.55 3.84 10.74 9 12 5.16-1.26 9-6.45 9-12V5l-9-4z"/><g fill="none" stroke="#0a1929"><circle cx="11.8" cy="11.9" r="3.8" stroke-width="2.4"/><path d="M14.7 14.8 19.5 19.6" stroke-width="2.2"/></g></svg>
<div class="b" style="left:385px;top:750px;width:121px;height:25px;border:1px solid #ffc107;background:rgba(255,193,7,0.08);box-sizing:border-box"></div>
<div class="b" style="left:831px;top:750px;width:100px;height:25px;border:1px solid #d9d0c9;background:rgba(217,208,201,0.1);box-sizing:border-box;border-radius:13px"></div>
<div class="b" style="left:1290px;top:752px;width:39px;height:23px;background:#2d3c4b"></div>
<div class="b" style="left:1379px;top:750px;width:88px;height:25px;background:#fff;border-radius:5px"></div>
<svg class="ic" style="left:1497px;top:747.8px;width:30px;height:30px;color:#fff;" viewBox="0 0 24 24" fill="currentColor"><path d="M12 8c1.1 0 2-.9 2-2s-.9-2-2-2-2 .9-2 2 .9 2 2 2zm0 2c-1.1 0-2 .9-2 2s.9 2 2 2 2-.9 2-2-.9-2-2-2zm0 6c-1.1 0-2 .9-2 2s.9 2 2 2 2-.9 2-2-.9-2-2-2z"/></svg>
<div class="b" style="left:252px;top:856px;width:1310px;height:1px;background:#202f40"></div>
<svg class="ic" style="left:261px;top:810.2px;width:30px;height:30px;color:#b4bac1;" viewBox="0 0 24 24" fill="currentColor"><path d="M19 5v14H5V5h14m0-2H5c-1.1 0-2 .9-2 2v14c0 1.1.9 2 2 2h14c1.1 0 2-.9 2-2V5c0-1.1-.9-2-2-2z"/></svg>
<svg class="ic" style="left:315px;top:810.2px;width:30px;height:30px;color:#ffc107;" viewBox="0 0 24 24" fill="currentColor"><path d="M12 1 3 5v6c0 5.55 3.84 10.74 9 12 5.16-1.26 9-6.45 9-12V5l-9-4z"/><g fill="none" stroke="#0a1929"><circle cx="11.8" cy="11.9" r="3.8" stroke-width="2.4"/><path d="M14.7 14.8 19.5 19.6" stroke-width="2.2"/></g></svg>
<div class="b" style="left:385px;top:812px;width:121px;height:25px;border:1px solid #ffc107;background:rgba(255,193,7,0.08);box-sizing:border-box"></div>
<div class="b" style="left:831px;top:812px;width:100px;height:25px;border:1px solid #d9d0c9;background:rgba(217,208,201,0.1);box-sizing:border-box;border-radius:13px"></div>
<div class="b" style="left:1290px;top:814px;width:39px;height:23px;background:#2d3c4b"></div>
<div class="b" style="left:1379px;top:812px;width:88px;height:25px;background:#fff;border-radius:5px"></div>
<svg class="ic" style="left:1497px;top:810.3px;width:30px;height:30px;color:#fff;" viewBox="0 0 24 24" fill="currentColor"><path d="M12 8c1.1 0 2-.9 2-2s-.9-2-2-2-2 .9-2 2 .9 2 2 2zm0 2c-1.1 0-2 .9-2 2s.9 2 2 2 2-.9 2-2-.9-2-2-2zm0 6c-1.1 0-2 .9-2 2s.9 2 2 2 2-.9 2-2-.9-2-2-2z"/></svg>
<div class="b" style="left:1497px;top:767px;width:70px;height:70px;background:#ec407a;border-radius:50%;box-shadow:0 4px 6px rgba(0,0,0,.4),0 7px 12px rgba(0,0,0,.25);z-index:6"></div>
<svg class="ic" style="left:1517px;top:787px;width:30px;height:30px;color:#fff;z-index:7" viewBox="0 0 24 24" fill="currentColor"><path d="M19 13h-6v6h-2v-6H5v-2h6V5h2v6h6v2z"/></svg>
<span class="t" style="left:252px;top:105px;line-height:32px;font-size:29px;color:#00b1ff;letter-spacing:-0.63px;">BlueNoroff strikes again with new macOS malware</span>
<span class="t" style="left:300.2px;top:179px;line-height:20px;font-size:18px;color:#8a95a3;letter-spacing:-0.267px;">Search...</span>
<span class="t" style="left:1407px;top:177px;line-height:20px;font-size:17.5px;font-weight:bold;;transform:scaleX(1.0943);transform-origin:0 50%">27</span>
<span class="t" style="left:1432.8px;top:177px;line-height:20px;font-size:17.5px;letter-spacing:0.592px;">entitie(s)</span>
<span class="t" style="left:384.8px;top:249px;line-height:17px;font-size:15px;font-weight:bold;letter-spacing:-0.724px;">TYPE</span>
<span class="t" style="left:518px;top:249px;line-height:17px;font-size:15px;font-weight:bold;letter-spacing:-0.387px;">NAME</span>
<span class="t" style="left:830.6px;top:245px;line-height:17px;font-size:15px;font-weight:bold;letter-spacing:-0.919px;">LABELS</span>
<span class="t" style="left:1044.3px;top:249px;line-height:17px;font-size:15px;font-weight:bold;letter-spacing:-0.806px;">AUTHOR</span>
<span class="t" style="left:1178.5px;top:249px;line-height:17px;font-size:15px;font-weight:bold;letter-spacing:-0.238px;">CREATION ...</span>
<span class="t" style="left:1290.4px;top:245px;line-height:17px;font-size:15px;font-weight:bold;letter-spacing:-0.871px;">ANALYSES</span>
<span class="t" style="left:1378.2px;top:249px;line-height:17px;font-size:15px;font-weight:bold;letter-spacing:0.135px;">MARKING</span>
<span class="t" style="left:400.9px;top:316px;line-height:17px;font-size:15px;color:#8f962a;;transform:scaleX(0.9327);transform-origin:0 50%">ATTACK PA...</span>
<span class="t" style="left:518px;top:316px;line-height:18px;font-size:16.25px;letter-spacing:0.122px;">[T1552] Unsecured Credentials</span>
<span class="t" style="left:845.6px;top:316px;line-height:17px;font-size:15px;color:#ffffff;letter-spacing:0.243px;">No label</span>
<span class="t" style="left:1044.3px;top:316px;line-height:18px;font-size:16.25px;letter-spacing:-0.442px;">The MITRE Co...</span>
<span class="t" style="left:1178.5px;top:316px;line-height:18px;font-size:16.25px;letter-spacing:0.078px;">Aug 20, 2023</span>
<span class="t" style="left:1305.3px;top:318px;line-height:18px;font-size:16.25px;;transform:scaleX(0.9979);transform-origin:0 50%">63</span>
<span class="t" style="left:1398px;top:320px;line-height:15px;font-size:13.75px;color:#2b2b2b;letter-spacing:-0.095px;">TLP:CLEAR</span>
<span class="t" style="left:418px;top:379px;line-height:17px;font-size:15px;color:#2a8de8;;transform:scaleX(0.8686);transform-origin:0 50%">SECTOR</span>
<span class="t" style="left:519px;top:378px;line-height:18px;font-size:16.25px;">Technologies</span>
<span class="t" style="left:846.6px;top:379px;line-height:17px;font-size:15px;color:#54a285;letter-spacing:0.313px;">detection-microsoft-se...</span>
<span class="t" style="left:1044.3px;top:378px;line-height:18px;font-size:16.25px;letter-spacing:-0.095px;">Agence Nation...</span>
<span class="t" style="left:1178.5px;top:378px;line-height:18px;font-size:16.25px;letter-spacing:0.078px;">Aug 20, 2023</span>
<span class="t" style="left:1304.21px;top:381px;line-height:18px;font-size:16.25px;;transform:scaleX(1.093);transform-origin:0 50%">150</span>
<span class="t" style="left:1394.3px;top:381px;line-height:15px;font-size:13.75px;color:#2b2b2b;letter-spacing:0.056px;">TLP:C...</span>
<span class="t" style="left:405.32px;top:441px;line-height:17px;font-size:15px;color:#ffc107;;transform:scaleX(0.9778);transform-origin:0 50%">INDICATOR</span>
<span class="t" style="left:519px;top:441px;line-height:18px;font-size:16.25px;letter-spacing:0.181px;">swissborg.blog</span>
<span class="t" style="left:846.4px;top:441px;line-height:17px;font-size:15px;color:#d9d0c9;letter-spacing:0.258px;">bluenoroff</span>
<span class="t" style="left:1044.3px;top:441px;line-height:18px;font-size:16.25px;letter-spacing:0.072px;">AlienVault</span>
<span class="t" style="left:1177.5px;top:441px;line-height:18px;font-size:16.25px;letter-spacing:0.141px;">Nov 8, 2023</span>
<span class="t" style="left:1304.92px;top:443px;line-height:18px;font-size:16.25px;;transform:scaleX(0.875);transform-origin:0 50%">1</span>
<span class="t" style="left:1394.3px;top:443px;line-height:15px;font-size:13.75px;color:#2b2b2b;letter-spacing:0.056px;">TLP:C...</span>
<span class="t" style="left:410.05px;top:504px;line-height:17px;font-size:15px;color:#ff9800;;transform:scaleX(0.9485);transform-origin:0 50%">MALWARE</span>
<span class="t" style="left:518px;top:503px;line-height:18px;font-size:16.25px;letter-spacing:0.372px;">rustbucket</span>
<span class="t" style="left:845.8px;top:504px;line-height:17px;font-size:15px;color:#cd5f41;letter-spacing:0.352px;">rustbucket</span>
<span class="t" style="left:1043.3px;top:503px;line-height:18px;font-size:16.25px;letter-spacing:-0.03px;">Malpedia</span>
<span class="t" style="left:1178.5px;top:503px;line-height:18px;font-size:16.25px;letter-spacing:0.078px;">Aug 21, 2023</span>
<span class="t" style="left:1305.3px;top:506px;line-height:18px;font-size:16.25px;">3</span>
<span class="t" style="left:1394.3px;top:506px;line-height:15px;font-size:13.75px;letter-spacing:0.164px;">TLP:A...</span>
<span class="t" style="left:400.9px;top:566px;line-height:17px;font-size:15px;color:#8f962a;;transform:scaleX(0.9327);transform-origin:0 50%">ATTACK PA...</span>
<span class="t" style="left:518px;top:566px;line-height:18px;font-size:16.25px;letter-spacing:0.121px;">[T1496] Resource Hijacking</span>
<span class="t" style="left:845.4px;top:566px;line-height:17px;font-size:15px;color:#1fe07c;letter-spacing:0.164px;">resource hijacking -...</span>
<span class="t" style="left:1044.3px;top:566px;line-height:18px;font-size:16.25px;letter-spacing:-0.442px;">The MITRE Co...</span>
<span class="t" style="left:1178.5px;top:566px;line-height:18px;font-size:16.25px;letter-spacing:0.078px;">Aug 20, 2023</span>
<span class="t" style="left:1304.21px;top:568px;line-height:18px;font-size:16.25px;;transform:scaleX(1.093);transform-origin:0 50%">135</span>
<span class="t" style="left:1396.5px;top:570px;line-height:15px;font-size:13.75px;">TLP:GREEN</span>
<span class="t" style="left:405.32px;top:629px;line-height:17px;font-size:15px;color:#ffc107;;transform:scaleX(0.9778);transform-origin:0 50%">INDICATOR</span>
<span class="t" style="left:518px;top:628px;line-height:18px;font-size:16.25px;letter-spacing:0.313px;">recent.bico-news.blog</span>
<span class="t" style="left:846.4px;top:629px;line-height:17px;font-size:15px;color:#d9d0c9;letter-spacing:0.258px;">bluenoroff</span>
<span class="t" style="left:1044.3px;top:628px;line-height:18px;font-size:16.25px;letter-spacing:0.072px;">AlienVault</span>
<span class="t" style="left:1177.5px;top:628px;line-height:18px;font-size:16.25px;letter-spacing:0.141px;">Nov 8, 2023</span>
<span class="t" style="left:1304.92px;top:631px;line-height:18px;font-size:16.25px;;transform:scaleX(0.875);transform-origin:0 50%">1</span>
<span class="t" style="left:1394.3px;top:631px;line-height:15px;font-size:13.75px;color:#2b2b2b;letter-spacing:0.056px;">TLP:C...</span>
<span class="t" style="left:400.9px;top:691px;line-height:17px;font-size:15px;color:#8f962a;;transform:scaleX(0.9327);transform-origin:0 50%">ATTACK PA...</span>
<span class="t" style="left:518px;top:691px;line-height:18px;font-size:16.25px;letter-spacing:0.249px;">[T1036] Masquerading</span>
<span class="t" style="left:845.8px;top:691px;line-height:17px;font-size:15px;color:#8d5fa8;letter-spacing:0.269px;">masquerading - t1036</span>
<span class="t" style="left:1044.3px;top:691px;line-height:18px;font-size:16.25px;letter-spacing:-0.442px;">The MITRE Co...</span>
<span class="t" style="left:1178.5px;top:691px;line-height:18px;font-size:16.25px;letter-spacing:0.078px;">Aug 20, 2023</span>
<span class="t" style="left:1304.8px;top:693px;line-height:18px;font-size:16.25px;;transform:scaleX(1.0896);transform-origin:0 50%">452</span>
<span class="t" style="left:1398px;top:695px;line-height:15px;font-size:13.75px;color:#2b2b2b;letter-spacing:-0.095px;">TLP:CLEAR</span>
<span class="t" style="left:405.32px;top:754px;line-height:17px;font-size:15px;color:#ffc107;;transform:scaleX(0.9778);transform-origin:0 50%">INDICATOR</span>
<span class="t" style="left:518px;top:753px;line-height:18px;font-size:16.25px;letter-spacing:0.196px;">internal.daiwa.ventures</span>
<span class="t" style="left:846.4px;top:754px;line-height:17px;font-size:15px;color:#d9d0c9;letter-spacing:0.258px;">bluenoroff</span>
<span class="t" style="left:1044.3px;top:753px;line-height:18px;font-size:16.25px;letter-spacing:0.072px;">AlienVault</span>
<span class="t" style="left:1177.5px;top:753px;line-height:18px;font-size:16.25px;letter-spacing:0.141px;">Nov 8, 2023</span>
<span class="t" style="left:1304.92px;top:756px;line-height:18px;font-size:16.25px;;transform:scaleX(0.875);transform-origin:0 50%">1</span>
<span class="t" style="left:1394.3px;top:756px;line-height:15px;font-size:13.75px;color:#2b2b2b;letter-spacing:0.056px;">TLP:C...</span>
<span class="t" style="left:405.32px;top:816px;line-height:17px;font-size:15px;color:#ffc107;;transform:scaleX(0.9778);transform-origin:0 50%">INDICATOR</span>
<span class="t" style="left:518px;top:816px;line-height:18px;font-size:16.25px;letter-spacing:0.258px;">internal-server.nextera.capital</span>
<span class="t" style="left:846.4px;top:816px;line-height:17px;font-size:15px;color:#d9d0c9;letter-spacing:0.258px;">bluenoroff</span>
<span class="t" style="left:1044.3px;top:816px;line-height:18px;font-size:16.25px;letter-spacing:0.072px;">AlienVault</span>
<span class="t" style="left:1177.5px;top:816px;line-height:18px;font-size:16.25px;letter-spacing:0.141px;">Nov 8, 2023</span>
<span class="t" style="left:1304.92px;top:818px;line-height:18px;font-size:16.25px;;transform:scaleX(0.875);transform-origin:0 50%">1</span>
<span class="t" style="left:1394.3px;top:818px;line-height:15px;font-size:13.75px;color:#2b2b2b;letter-spacing:0.056px;">TLP:C...</span>
</main>
<aside class="sec filters">
<div class="b" style="left:1605px;top:77px;width:306px;height:792px;background:#001e3c;border-left:1px solid #1a3351;"></div>
<svg class="ic" style="left:1735.7px;top:94.2px;width:25px;height:25px;color:#55697f;" viewBox="0 0 24 24" fill="currentColor"><path d="M2.39 1.73L1.11 3L9 10.89V16.87C8.96 17.16 9.06 17.47 9.29 17.7L13.3 21.71C13.69 22.1 14.32 22.1 14.71 21.71C14.94 21.5 15.04 21.18 15 20.88V16.89L20.84 22.73L22.11 21.46L15 14.35V14.34L13 12.35L11 10.34L4.15 3.5L2.39 1.73M6.21 3L8.2 5H16.96L13.11 9.91L15 11.8V10.75L19.79 4.62C20.13 4.19 20.05 3.56 19.62 3.22C19.43 3.08 19.22 3 19 3H6.21M11 12.89L13 14.89V17.58L11 15.58V12.89Z"/></svg>
<svg class="ic" style="left:1624.1px;top:146.1px;width:25px;height:25px;color:#b0b8c1;" viewBox="0 0 24 24" fill="currentColor"><path d="M19 5v14H5V5h14m0-2H5c-1.1 0-2 .9-2 2v14c0 1.1.9 2 2 2h14c1.1 0 2-.9 2-2V5c0-1.1-.9-2-2-2z"/></svg>
<svg class="ic" style="left:1624.1px;top:193.6px;width:25px;height:25px;color:#b0b8c1;" viewBox="0 0 24 24" fill="currentColor"><path d="M19 5v14H5V5h14m0-2H5c-1.1 0-2 .9-2 2v14c0 1.1.9 2 2 2h14c1.1 0 2-.9 2-2V5c0-1.1-.9-2-2-2z"/></svg>
<svg class="ic" style="left:1624.1px;top:241.1px;width:25px;height:25px;color:#b0b8c1;" viewBox="0 0 24 24" fill="currentColor"><path d="M19 5v14H5V5h14m0-2H5c-1.1 0-2 .9-2 2v14c0 1.1.9 2 2 2h14c1.1 0 2-.9 2-2V5c0-1.1-.9-2-2-2z"/></svg>
<svg class="ic" style="left:1624.1px;top:288.6px;width:25px;height:25px;color:#b0b8c1;" viewBox="0 0 24 24" fill="currentColor"><path d="M19 5v14H5V5h14m0-2H5c-1.1 0-2 .9-2 2v14c0 1.1.9 2 2 2h14c1.1 0 2-.9 2-2V5c0-1.1-.9-2-2-2z"/></svg>
<svg class="ic" style="left:1624.1px;top:336.1px;width:25px;height:25px;color:#b0b8c1;" viewBox="0 0 24 24" fill="currentColor"><path d="M19 5v14H5V5h14m0-2H5c-1.1 0-2 .9-2 2v14c0 1.1.9 2 2 2h14c1.1 0 2-.9 2-2V5c0-1.1-.9-2-2-2z"/></svg>
<svg class="ic" style="left:1624.1px;top:383.6px;width:25px;height:25px;color:#b0b8c1;" viewBox="0 0 24 24" fill="currentColor"><path d="M19 5v14H5V5h14m0-2H5c-1.1 0-2 .9-2 2v14c0 1.1.9 2 2 2h14c1.1 0 2-.9 2-2V5c0-1.1-.9-2-2-2z"/></svg>
<svg class="ic" style="left:1624.1px;top:431.1px;width:25px;height:25px;color:#b0b8c1;" viewBox="0 0 24 24" fill="currentColor"><path d="M19 5v14H5V5h14m0-2H5c-1.1 0-2 .9-2 2v14c0 1.1.9 2 2 2h14c1.1 0 2-.9 2-2V5c0-1.1-.9-2-2-2z"/></svg>
<svg class="ic" style="left:1624.1px;top:478.6px;width:25px;height:25px;color:#b0b8c1;" viewBox="0 0 24 24" fill="currentColor"><path d="M19 5v14H5V5h14m0-2H5c-1.1 0-2 .9-2 2v14c0 1.1.9 2 2 2h14c1.1 0 2-.9 2-2V5c0-1.1-.9-2-2-2z"/></svg>
<svg class="ic" style="left:1624.1px;top:526.1px;width:25px;height:25px;color:#b0b8c1;" viewBox="0 0 24 24" fill="currentColor"><path d="M19 5v14H5V5h14m0-2H5c-1.1 0-2 .9-2 2v14c0 1.1.9 2 2 2h14c1.1 0 2-.9 2-2V5c0-1.1-.9-2-2-2z"/></svg>
<svg class="ic" style="left:1624.1px;top:573.6px;width:25px;height:25px;color:#b0b8c1;" viewBox="0 0 24 24" fill="currentColor"><path d="M19 5v14H5V5h14m0-2H5c-1.1 0-2 .9-2 2v14c0 1.1.9 2 2 2h14c1.1 0 2-.9 2-2V5c0-1.1-.9-2-2-2z"/></svg>
<svg class="ic" style="left:1624.1px;top:621.1px;width:25px;height:25px;color:#b0b8c1;" viewBox="0 0 24 24" fill="currentColor"><path d="M19 5v14H5V5h14m0-2H5c-1.1 0-2 .9-2 2v14c0 1.1.9 2 2 2h14c1.1 0 2-.9 2-2V5c0-1.1-.9-2-2-2z"/></svg>
<svg class="ic" style="left:1624.1px;top:668.6px;width:25px;height:25px;color:#b0b8c1;" viewBox="0 0 24 24" fill="currentColor"><path d="M19 5v14H5V5h14m0-2H5c-1.1 0-2 .9-2 2v14c0 1.1.9 2 2 2h14c1.1 0 2-.9 2-2V5c0-1.1-.9-2-2-2z"/></svg>
<svg class="ic" style="left:1624.1px;top:716.1px;width:25px;height:25px;color:#b0b8c1;" viewBox="0 0 24 24" fill="currentColor"><path d="M19 5v14H5V5h14m0-2H5c-1.1 0-2 .9-2 2v14c0 1.1.9 2 2 2h14c1.1 0 2-.9 2-2V5c0-1.1-.9-2-2-2z"/></svg>
<svg class="ic" style="left:1624.1px;top:763.6px;width:25px;height:25px;color:#b0b8c1;" viewBox="0 0 24 24" fill="currentColor"><path d="M19 5v14H5V5h14m0-2H5c-1.1 0-2 .9-2 2v14c0 1.1.9 2 2 2h14c1.1 0 2-.9 2-2V5c0-1.1-.9-2-2-2z"/></svg>
<svg class="ic" style="left:1624.1px;top:811.1px;width:25px;height:25px;color:#b0b8c1;" viewBox="0 0 24 24" fill="currentColor"><path d="M19 5v14H5V5h14m0-2H5c-1.1 0-2 .9-2 2v14c0 1.1.9 2 2 2h14c1.1 0 2-.9 2-2V5c0-1.1-.9-2-2-2z"/></svg>
<svg class="ic" style="left:1624.1px;top:858.6px;width:25px;height:25px;color:#b0b8c1;" viewBox="0 0 24 24" fill="currentColor"><path d="M19 5v14H5V5h14m0-2H5c-1.1 0-2 .9-2 2v14c0 1.1.9 2 2 2h14c1.1 0 2-.9 2-2V5c0-1.1-.9-2-2-2z"/></svg>
<span class="t" style="left:1625.7px;top:96px;line-height:20px;font-size:17.5px;color:#bcc4cf;-webkit-text-stroke:0.6px;letter-spacing:0.363px;">Entity types</span>
<span class="t" style="left:1660.9px;top:150px;line-height:18px;font-size:16.25px;letter-spacing:-0.729px;">Area</span>
<span class="t" style="left:1660.9px;top:197px;line-height:18px;font-size:16.25px;letter-spacing:0.083px;">Attack Pattern</span>
<span class="t" style="left:1660.9px;top:245px;line-height:18px;font-size:16.25px;letter-spacing:-0.276px;">Campaign</span>
<span class="t" style="left:1660.9px;top:292px;line-height:18px;font-size:16.25px;letter-spacing:-0.304px;">Channel</span>
<span class="t" style="left:1660.9px;top:340px;line-height:18px;font-size:16.25px;letter-spacing:-0.587px;">City</span>
<span class="t" style="left:1660.9px;top:387px;line-height:18px;font-size:16.25px;letter-spacing:-0.212px;">Country</span>
<span class="t" style="left:1660.9px;top:435px;line-height:18px;font-size:16.25px;letter-spacing:-0.119px;">Course of action</span>
<span class="t" style="left:1659.9px;top:482px;line-height:18px;font-size:16.25px;letter-spacing:-0.18px;">Data Component</span>
<span class="t" style="left:1659.9px;top:530px;line-height:18px;font-size:16.25px;letter-spacing:-0.279px;">Data Source</span>
<span class="t" style="left:1659.9px;top:577px;line-height:18px;font-size:16.25px;letter-spacing:-0.285px;">Event</span>
<span class="t" style="left:1659.9px;top:625px;line-height:18px;font-size:16.25px;letter-spacing:-0.248px;">Feedback</span>
<span class="t" style="left:1660.9px;top:672px;line-height:18px;font-size:16.25px;letter-spacing:-0.03px;">Grouping</span>
<span class="t" style="left:1659.9px;top:720px;line-height:18px;font-size:16.25px;letter-spacing:0.457px;">Incident</span>
<span class="t" style="left:1659.9px;top:767px;line-height:18px;font-size:16.25px;letter-spacing:0.135px;">Incident response</span>
<span class="t" style="left:1659.9px;top:815px;line-height:18px;font-size:16.25px;letter-spacing:0.361px;">Indicator</span>
<span class="t" style="left:1659.9px;top:862px;line-height:18px;font-size:16.25px;letter-spacing:0.339px;">Individual</span>
</aside>
<div class="sec annotations">
<div class="b" style="left:720px;top:9px;width:96px;height:58px;border:5px solid #ed1c24;box-sizing:border-box;z-index:5"></div>
<svg class="ic" style="left:1400px;top:660px;width:130px;height:120px;z-index:8" viewBox="1400 660 130 120" fill="none" stroke="#e6192e" stroke-width="7" stroke-linecap="round" stroke-linejoin="round"><path d="M1432.5 685.5L1494 758.5"/><path d="M1497.5 728L1495 759.5L1462 757"/></svg>
</div>
</body></html>
